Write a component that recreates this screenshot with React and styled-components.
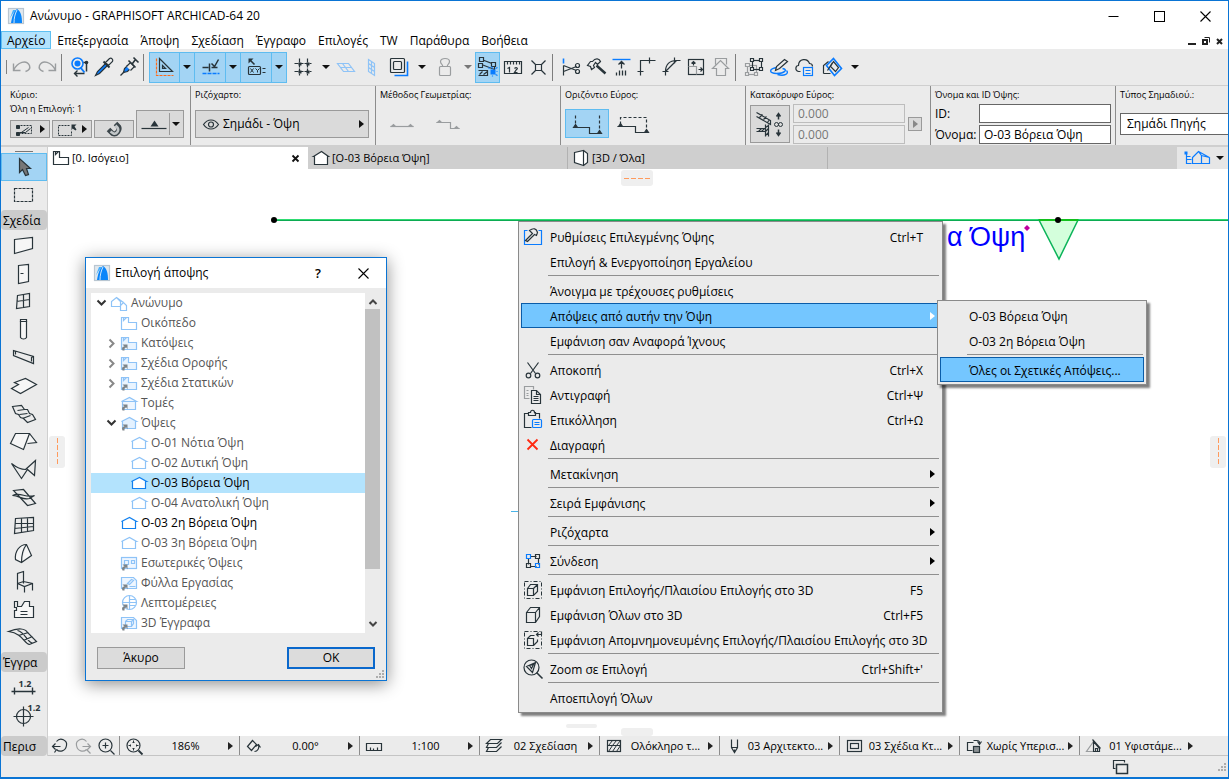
import React from "react";
import styled, { createGlobalStyle, css } from "styled-components";

const ink = "#28343a";
const blue = "#0a7cff";
const pale = "#8ec3f7";
const ghost = "#9a9d9f";
const orange = "#ff6a1a";

const Global = createGlobalStyle`
  * { box-sizing: border-box; }
  html, body { margin: 0; padding: 0; }
  body { font-family: "Open Sans", "Noto Sans", sans-serif; font-size: 12px; line-height: 16px; color: #000; }
  button, input, select { font: inherit; color: inherit; }
  button { padding: 0; border: 0; background: none; }
  svg { display: block; flex: none; overflow: visible; }
`;

/* ---------- drawings ---------- */

/* Strokes run through pixel centres, unless `raw` says that the paths already do. */
const Glyph = ({ w = 20, h = 20, c = ink, sw = 1.2, raw, children }) => (
  <svg
    width={w} height={h} fill="none" stroke={c} strokeWidth={sw} aria-hidden="true"
    viewBox={raw || c === "none" ? `0 0 ${w} ${h}` : `-0.5 -0.5 ${w} ${h}`}
  >
    {children}
  </svg>
);

const Caret = ({ c = "#111" }) => (
  <Glyph w={8} h={4} c="none"><path d="M0 0h8L4 4z" fill={c} /></Glyph>
);
const Arrow = ({ c = "#111" }) => (
  <Glyph w={5} h={8} c="none"><path d="M0 0v8l5-4z" fill={c} /></Glyph>
);

const Logo = () => (
  <Glyph w={16} h={16} c="none">
    <rect x=".5" y=".5" width="15" height="15" fill="#e1e8ee" stroke="#b9c6d1" />
    <path d="M1 13L5 2h3C4 6 2 10 1 13z" fill="#45b0ff" />
    <path d="M3 15C4 8 6 3 9 1c4 2 5 8 5 14z" fill="#0a86fa" />
    <path d="M6 15c0-5 1-9 3-13" stroke="#fff" strokeWidth=".8" />
  </Glyph>
);

const Undo = () => <Glyph c={ghost} sw={1.4}><path d="M1 6v7h7M1 13C5 4 14 2 17 8c1 3-1 5-4 6" /></Glyph>;
const Redo = () => <Glyph c={ghost} sw={1.4}><path d="M18 6v7h-7M18 13C14 4 5 2 2 8c-1 3 1 5 4 6" /></Glyph>;
const FindSelect = () => (
  <Glyph>
    <circle cx="8" cy="6" r="5.5" stroke={blue} strokeWidth="1.6" />
    <circle cx="8" cy="6" r="3" fill={blue} stroke="none" />
    <path d="M11 10l4 5" stroke={blue} strokeWidth="2" />
    <path d="M17 14V5M14 5h3" strokeWidth="1.5" /><circle cx="17" cy="5" r="1.800" fill={ink} stroke="none" />
    <path d="M6 16h9M8 13l-3 3 3 3" strokeWidth="1.4" />
  </Glyph>
);
const Dropper = () => (
  <Glyph>
    <path d="M1 18l2-4 8-8 2 2-8 8z" fill={blue} stroke={ink} />
    <path d="M9 4l6 6" strokeWidth="2" /><path d="M11 5l4-4c2-1 4 1 3 3l-4 4z" fill="#ebebeb" />
  </Glyph>
);
const Syringe = () => (
  <Glyph>
    <path d="M1 18l4-4" /><path d="M4 15l1-4 3-3 3 3-3 3z" fill={blue} /><path d="M7 9l4-4 4 4-4 4" fill="#ebebeb" /><path d="M9 3l7 7M13 6l3-4M14 0l5 5" strokeWidth="1.6" />
  </Glyph>
);
const SetSquare = () => (
  <Glyph>
    <path d="M4 1v13h13zM7 8v3h3z" /><path d="M1 1v17h17" stroke={orange} strokeDasharray="3 1" />
  </Glyph>
);
const SnapGuide = () => (
  <Glyph><path d="M2 10h6M9 6v8M11 10h6M11 6l3 3 4-7" strokeWidth="1.5" /><path d="M2 16h17" stroke={blue} strokeDasharray="4 1" strokeWidth="1.5" /></Glyph>
);
const Tracker = () => (
  <Glyph>
    <path d="M2 1h5L2 6z" fill={ink} stroke="none" /><path d="M4 3l4 4" strokeWidth="1.6" /><rect x="2" y="9" width="12" height="8" rx="1" />
    <path d="M4 11l3 4M7 11l-3 4M9 11l2 2 2-2M11 13v2M16 11h3M16 15h3" strokeWidth="1" />
  </Glyph>
);
const Grid = () => <Glyph><path d="M6 1v17M14 1v17M1 6h17M1 14h17" strokeDasharray="4 1" /><path d="M5 5h3v3H5zM13 5h3v3h-3zM5 13h3v3H5zM13 13h3v3h-3z" fill={ink} stroke="none" /></Glyph>;
const PlaneFlat = () => <Glyph c={pale}><path d="M1 6h11l6 8H7zM4 10h11M6 6l6 8" /></Glyph>;
const PlaneUp = () => <Glyph c={pale}><path d="M7 2l6 4v12l-6-4zM10 4v12M7 6l6 4M7 10l6 4" /></Glyph>;
const Stack = () => <Glyph><path d="M5 18h13V4" stroke={blue} strokeWidth="1.6" /><rect x="1" y="1" width="14" height="14" rx="1" /><rect x="4" y="4" width="8" height="8" rx="1" /></Glyph>;
const Stamp = () => <Glyph c={ghost}><rect x="4" y="9" width="11" height="9" rx="1" /><path d="M7 9c1-2-2-2-2-5 0-4 9-4 9 0 0 3-3 3-2 5" /></Glyph>;
const Suspend = () => (
  <Glyph>
    <path d="M3 2l13 5v5L3 7" /><path d="M1 0h4v4H1zM0 6h4v4H0zM13 5h4v4h-4z" fill="#a3d4f4" /><path d="M0 13h9v5H0M1 17l3-3M5 17l4-3" />
    <path d="M12 12h5v5h-5z" fill={blue} stroke="none" /><path d="M13 9l1 2M19 10l-2 1M19 14h-1M19 18l-2-1M14 18v1M10 10l1 1" stroke={blue} />
  </Glyph>
);
const Measure = () => <Glyph><path d="M1 4h17v12H1zM4 4v3M7 4v3M10 4v3M13 4v3M16 4v3M4 11l2-1v5M11 11c2-2 4 0 2 1l-2 3h3" /></Glyph>;
const Explode = () => <Glyph><path d="M7 7h6v6H7zM7 7L3 3M13 7l4-4M7 13l-4 4M13 13l4 4" /></Glyph>;
const Split = () => <Glyph><path d="M2 1v5" stroke={blue} strokeWidth="1.6" /><path d="M2 8v10M2 14l13-5M2 8l13 5" /><circle cx="16" cy="8" r="2" /><circle cx="16" cy="14" r="2" /></Glyph>;
const Adjust = () => <Glyph><path d="M6 4c3-4 7-3 8 0l-3 3-2-2-2 3 1 2-3 2-1-3-3-1 3-4z" /><path d="M10 8l9 8" strokeWidth="2.400" /></Glyph>;
const Elevate = () => <Glyph><path d="M1 2h18" stroke={blue} strokeWidth="1.4" /><path d="M10 11V4M7 7l3-3 3 3M5 18v-3M8 18v-5M11 18v-5M14 18v-5" strokeWidth="1.3" /></Glyph>;
const Intersect = () => <Glyph><path d="M4 18V3h9M1 14h6M13 0v6M13 3h6" /></Glyph>;
const Fillet = () => <Glyph><path d="M4 18v-4C4 7 8 3 15 3M1 14h6M13 0v6M4 14L15 3M15 3h4" /></Glyph>;
const Resize = () => <Glyph><rect x="2" y="2" width="15" height="15" /><path d="M2 9h8v8" stroke={ghost} /><path d="M7 8V4M5 6l2-2 2 2M12 12h4M14 10l2 2-2 2" /></Glyph>;
const HouseTool = () => <Glyph c={ghost}><path d="M1 11l8-8 8 8H14v7H5v-7zM4 7V1h11v6" /></Glyph>;
const GroupIcon = () => <Glyph><rect x="3" y="8" width="9" height="9" stroke={ghost} /><path d="M1 6h4v3H1zM1 15h3v3H1zM10 15h3v3h-3z" stroke={ghost} fill="#ebebeb" /><rect x="8" y="3" width="9" height="9" /><path d="M6 1h3v3H6zM15 1h3v3h-3zM6 10h3v3H6zM15 10h3v3h-3z" fill="#ebebeb" /></Glyph>;
const Markup = () => <Glyph><path d="M8 10c-9 1-9 6-1 6s12-4 6-5M8 17c7 2 12-1 9-4" stroke={blue} strokeWidth="1.4" /><path d="M6 13l1-4 8-7 3 2-8 7z" fill="#ebebeb" /></Glyph>;
const Cloud = () => <Glyph><path d="M6 14H4c-4-1-3-6 0-6 0-7 9-8 11-2 3 0 3 2 3 3" /><rect x="9" y="10" width="9" height="8" stroke={blue} fill="#ebebeb" /><path d="M11 13h5M11 16h5" stroke={blue} strokeWidth="1" /></Glyph>;
const Marker3 = () => <Glyph><path d="M1 16V8l5-4M1 16h7" /><path d="M11 1l8 10-7 7-8-10z" stroke={blue} strokeWidth="1.6" /><path d="M8 9l3-5 5 6-3 4zM5 13L10 5" /></Glyph>;

/* toolbox drawings, 26 x 24 */
const Tool = ({ children }) => <Glyph w={26} h={24}>{children}</Glyph>;
const tools = {
  arrow: <Tool><path d="M8 3v14l3-3 3 6 3-1-2-6h4z" fill="#777" /></Tool>,
  marquee: <Tool><rect x="3" y="5" width="18" height="13" strokeDasharray="3 1" /></Tool>,
  wall: <Tool><path d="M3 6l18-2v11L3 20z" fill="#f6f6f6" /></Tool>,
  door: <Tool><path d="M7 4l10-1v17L7 22zM9 12h3" fill="#f6f6f6" /></Tool>,
  window: <Tool><path d="M6 6l12-2v13L5 19zM12 5v13M5 12l13-2" /></Tool>,
  column: <Tool><path d="M9 4v16c1 2 5 2 6 0V4z" fill="#f6f6f6" /><path d="M9 2h6v2H9z" /></Tool>,
  beam: <Tool><path d="M2 5l20 6v7L2 10zM2 5l2 1v3M22 11l-2 1v4" /></Tool>,
  slab: <Tool><path d="M0 15l7-4-4-2 11-4 11 6-16 9z" fill="#f6f6f6" /></Tool>,
  stair: <Tool><path d="M1 5l9-1 3 4 3 0 2 4 3 1 3 5-8 3-4-4-3-1-2-3-3-1zM6 9l7-1M8 13l8-1M11 17l8-3" /></Tool>,
  roof: <Tool><path d="M-1 14L4 4h14l-6 16zM18 4l7 9-9 1" fill="#f6f6f6" /></Tool>,
  shell: <Tool><path d="M0 6c5 4 10 6 14 6l10-9-1 15-7-6-6 9zM14 12l10-9" /></Tool>,
  skylight: <Tool><path d="M2 5l10-1 12 14-8 2zM1 10c8-4 13 3 22 0l-5 3c-7 2-10-3-17-3z" /></Tool>,
  curtain: <Tool><path d="M4 5l18-1v13L3 20zM10 5v14M16 5v13M4 10h18M3 15l19-2" /></Tool>,
  morph: <Tool><path d="M4 18C3 10 8 3 15 3l5 11-10 7zM15 3c-4 5-5 11-5 18" fill="#f6f6f6" /></Tool>,
  object: <Tool><path d="M6 14V4l6-2v12M6 14l6-2 9 2v7M6 14v6M6 14l7 3 8-3M13 17v6" /></Tool>,
  zone: <Tool><path d="M3 4h3v5h4l3-5h5v5h4v11H3v-7h2v-3H3zM9 14h7M9 17h7" fill="#f6f6f6" /></Tool>,
  mesh: <Tool><path d="M-3 6c10-4 17-3 19 1l9 9-7 3C12 18 12 8-3 6zM6 5c8 2 8 10 15 13M7 10l10-3M12 15l9-4" /></Tool>,
  dimension: <Tool><path d="M0 16h24M3 12v7M21 12v7" strokeWidth="1.4" /><text x="7" y="11" fontSize="9" fontWeight="bold" fill={ink} stroke="none">1.2</text></Tool>,
  level: <Tool><circle cx="12" cy="13" r="7" /><path d="M2 13h20M12 3v20" /><text x="16" y="7" fontSize="9" fontWeight="bold" fill={ink} stroke="none">1.2</text></Tool>,
};

/* navigator drawings, 18 x 16 */
const Link = () => <path d="M2 15c-1-3 0-4 2-4L2 9h5v5l-1-2c-2 0-2 1-2 3z" fill="#7d8489" stroke="none" />;
const nav = (c, link) => ({
  project: <Glyph w={18} h={16} c={c}><path d="M1 11V6l5-4 4 4v5zM10 11v4h6v-5l-3-3-3 3M6 2l7 5" /></Glyph>,
  plan: <Glyph w={18} h={16} c={c}><path d="M1 2h7v5h8v7H1z" fill={link ? "#e9f4ff" : "#fff"} /><path d="M3 2v3l3-3" />{link && <Link />}</Glyph>,
  section: <Glyph w={18} h={16} c={c}><path d="M1 6l8-4 7 4zM2 6v8h13V6" fill="#eef6ff" />{link && <Link />}</Glyph>,
  elevation: <Glyph w={18} h={16} c={c}><path d="M1 6l8-4 7 4h-1v7H2V6z" fill={link ? "#e3f1ff" : "#fff"} />{link && <Link />}</Glyph>,
  interior: <Glyph w={18} h={16} c={c}><rect x="1" y="2" width="15" height="11" fill="#eef6ff" /><path d="M4 5h4v4H4zM11 5h3v3h-3z" /><Link /></Glyph>,
  worksheet: <Glyph w={18} h={16} c={c}><path d="M1 2h12l3 3v8H1z" fill="#eef6ff" /><path d="M7 8l4-4 2 1-4 4zM9 11h6" /><Link /></Glyph>,
  detail: <Glyph w={18} h={16} c={c}><circle cx="9" cy="7" r="7" /><path d="M2 7h14M9 0v14M9 10h6M9 4h6" /><Link /></Glyph>,
  doc3d: <Glyph w={18} h={16} c={c}><path d="M1 2h12l3 3v8H1z" fill="#eef6ff" /><path d="M5 6l2-2h6v4l-2 3H5zM5 6h6v5M11 6l2-2" /><Link /></Glyph>,
});

const Cube = () => <path d="M3 7l4-5h9v9l-4 6H3zM3 7h9v10M12 7l4-5" />;
const DashFrame = () => <rect x="1" y="1" width="17" height="17" strokeDasharray="4 2 1 2" />;
const menuIcons = {
  settings: <Glyph><path d="M4 3H1v14h17V3h-3" stroke={blue} /><path d="M2 13l7-7-3-3c4-3 7-2 8 2l-1 3-2-1-7 7z" fill="#ebebeb" /></Glyph>,
  cut: <Glyph><path d="M4 2l8 11M15 2L7 13" /><circle cx="5" cy="15" r="2.300" /><circle cx="14" cy="15" r="2.300" /></Glyph>,
  copy: <Glyph><path d="M10 4V1H1v12h5M3 5h2M3 8h2M3 10h2" stroke={ghost} /><path d="M8 5h5l4 4v9H8zM13 5v4h4" fill="#ebebeb" /><path d="M10 11h5M10 13h5M10 15h5" strokeWidth="1" /></Glyph>,
  paste: <Glyph><path d="M8 17H1V3h4M11 3h5v5M5 2h2c0-3 4-3 4 0h1v3H5z" /><rect x="9" y="9" width="9" height="8" rx="1" stroke={blue} /><path d="M11 12h5M11 14h5" stroke={blue} strokeWidth="1" /></Glyph>,
  remove: <Glyph c="#ff2a12" sw={1.800}><path d="M4 4l10 10M14 4L4 14" /></Glyph>,
  connect: <Glyph><path d="M7 5h6M15 7v6M5 7v6M7 15h6" /><path d="M3 3h4v4H3zM12 12h4v4h-4z" stroke={blue} /><path d="M12 3h4v4h-4zM3 12h4v4H3z" /></Glyph>,
  sel3d: <Glyph sw={1}><DashFrame /><path d="M4 8l3-4h7v7l-4 4H4zM4 8h6v7M10 8l4-4" strokeWidth="1.2" /></Glyph>,
  all3d: <Glyph><Cube /></Glyph>,
  mem3d: <Glyph sw={1}><DashFrame /><path d="M4 8l3-3h4M4 8h6v7H4zM10 15l4-4V9M18 1v3h-5M15 2l-2 2 2 2" strokeWidth="1.2" /></Glyph>,
  zoom: <Glyph><circle cx="8" cy="8" r="7.500" /><path d="M13 13l6 6" strokeWidth="1.600" /><path d="M3 7l9-4-3 10zM6 6l4-1-2 4z" /></Glyph>,
};

/* ---------- window frame ---------- */

const Window = styled.div`
  display: flex; flex-direction: column; min-height: 100vh;
  border: 1px solid #0a74d4; border-bottom-width: 2px; background: #ebebeb; overflow: hidden;
`;
const TitleBar = styled.header`
  display: flex; align-items: center; height: 30px; padding-left: 7px; background: #fff;
`;
const Caption = styled.h1`margin: 0 0 0 6px; flex: 1; font-size: 12px; font-weight: 400;`;
const CaptionButton = styled.button`width: 46px; height: 30px; display: grid; place-items: center;`;

const MenuBar = styled.nav`display: flex; height: 18px; background: #fff;`;
const MenuTitle = styled.button`
  padding: 0 6px; line-height: 20px; white-space: nowrap;
  ${(p) => p.$open && css`background: #b3e3fd; box-shadow: inset 0 0 0 1px #5fc0f2;`}
`;
const ChildControls = styled.div`display: flex; align-items: center; gap: 6px; margin-left: auto; padding: 2px 5px 0 0;`;

const Toolbar = styled.div`
  display: flex; align-items: center; height: 37px; padding-left: 5px;
  border-bottom: 1px solid #cfcfcf;
`;
const ToolButton = styled.button`
  display: grid; place-items: center; width: ${(p) => p.$w || 25}px; height: 31px; flex: none;
  ${(p) => p.$on && css`background: #a3d4f4; border: 1px solid #5fbcf0;`}
  ${(p) => p.$join && css`border-left: 0;`}
`;
const Rule = styled.span`width: 1px; height: 27px; background: #7d7d7d; margin: 0 ${(p) => p.$r || 4}px 0 2px; flex: none;`;
const Grip = styled.span`width: 1px; height: 14px; background: #808080; margin-right: 2px; flex: none;`;

const InfoBar = styled.div`display: flex; height: 61px; border-bottom: 2px solid #cfcfcf; padding-left: 5px; overflow: hidden;`;
const Section = styled.section`
  flex: ${(p) => (p.$last ? "1 0 108px" : "none")}; width: 185px; padding: 2px 4px 0 4px;
  ${(p) => !p.$last && css`border-right: 1px solid #8c8c8c;`}
`;
const Small = styled.p`margin: 0; font-size: 9px; line-height: 14px; white-space: nowrap;`;
const SmallLabel = styled(Small)`display: block;`;
const Row = styled.div`display: flex; align-items: ${(p) => p.$align || "center"}; gap: ${(p) => p.$gap ?? 2}px; margin-top: ${(p) => p.$top || 0}px;`;
const Stacked = styled.div`display: flex; flex-direction: column; gap: 2px;`;
const PushButton = styled.button`
  display: flex; align-items: center; justify-content: center; gap: ${(p) => p.$gap ?? 7}px; flex: none;
  width: ${(p) => p.$w}px; height: ${(p) => p.$h || 18}px; background: ${(p) => (p.$flat ? "transparent" : "#dadada")};
  border: ${(p) => (p.$flat ? "0" : "1px solid #9a9a9a")};
  ${(p) => p.$on && css`background: #a3d4f4; border-color: #5fbcf0;`}
`;
const ButtonRule = styled.i`width: 1px; height: 22px; background: #9a9a9a;`;
const WideButton = styled(PushButton)`justify-content: flex-start; gap: 4px; padding: 0 4px 0 7px; span { flex: 1; text-align: left; }`;
const Field = styled.input`
  width: ${(p) => p.$w}px; height: 19px; padding: 0 4px; border: 1px solid #666; background: #fff; border-radius: 0;
  &:disabled { border-color: #bdbdbd; background: #ebebeb; color: #777; }
`;
const FieldLabel = styled.label`display: flex; align-items: center; gap: 2px; span { width: 42px; }`;
const TypeSelect = styled.select`
  appearance: none; width: 200px; height: 22px; margin-top: 11px; padding: 0 6px; border: 1px solid #666; border-radius: 0; background: #fff;
`;

const Body = styled.div`display: flex; flex: 1; min-height: 0;`;
const Toolbox = styled.aside`
  width: 47px; flex: none; display: flex; flex-direction: column; border-right: 1px solid #cfcfcf;
  &::before { content: ""; height: 1px; width: 18px; margin: 4px 14px 1px; background: #777; flex: none; }
`;
const ToolItem = styled.button`
  display: grid; place-items: center; height: 28px; width: 46px; flex: none;
  ${(p) => p.$on && css`background: #a3d4f4; border: 1px solid #5fbcf0;`}
`;
const ToolHeading = styled.h2`
  margin: ${(p) => (p.$bottom ? "auto 0 0" : "1px 0")}; padding-left: 2px; height: 20px; flex: none; font-size: 12px; line-height: 21px; font-weight: 400;
  background: #cbcbcb; border-radius: 4px; white-space: nowrap;
`;

const Work = styled.div`flex: 1; min-width: 0; display: flex; flex-direction: column;`;
const Tabs = styled.div`display: flex; height: 22px; background: #cfcfcf;`;
const Tab = styled.button`
  display: flex; align-items: center; gap: 2px; width: 260px; padding: 0 9px 0 4px; font-size: 11px;
  background: ${(p) => (p.$on ? "#fff" : "transparent")};
  ${(p) => !p.$on && css`border-right: 1px solid #b2b2b2;`}
  span { flex: 1; text-align: left; }
`;
const NavPopup = styled.button`display: flex; align-items: center; justify-content: space-between; width: 51px; padding: 0 4px 0 7px; margin-left: auto; background: #e6e6e6;`;

const Canvas = styled.main`position: relative; flex: 1; min-height: 567px; background: #fff;`;
const Drawing = styled.svg`position: absolute; inset: 0; width: 100%; height: 100%;`;

const StatusBar = styled.div`display: flex; height: 20px; border-bottom: 1px solid #c4c4c4;`;
const ZoomTools = styled.div`display: flex; align-items: center; width: 71px; gap: 5px; padding-left: 3px;`;
const StatusCell = styled.button`
  display: flex; align-items: center; flex: none; width: 120px; padding: 0 6px 0 5px; border-left: 1px solid #8c8c8c; font-size: 11px;
  span { flex: 1; text-align: center; white-space: nowrap; }
`;
const Footer = styled.footer`display: flex; justify-content: flex-end; align-items: center; gap: 90px; height: 21px; padding-right: 2px;`;

/* ---------- menus ---------- */

const Menu = styled.div`
  position: absolute; left: ${(p) => p.$x}px; top: ${(p) => p.$y}px; width: ${(p) => p.$w}px;
  padding: 2px; background: #ebebeb; border: 1px solid #8a8a8a; box-shadow: 3px 3px 2px rgba(0, 0, 0, 0.5);
`;
const MenuItem = styled.button`
  display: flex; align-items: center; width: 100%; height: 25px; border: 1px solid transparent; padding: 0 ${(p) => (p.$sub ? 4 : 16)}px 0 0;
  ${(p) => p.$on && css`background: #74c6ff; border-color: #0a5ca8;`}
  em { font-style: normal; }
  span { flex: 1; text-align: left; padding-top: 2px; white-space: nowrap; }
  em { padding-top: 2px; }
`;
const IconSlot = styled.i`width: 28px; flex: none; padding-left: 1px; height: 20px;`;
const Divider = styled.hr`height: 1px; margin: 1px 1px 2px 27px; border: 0; background: #8f8f8f;`;

const menu = [
  { t: "Ρυθμίσεις Επιλεγμένης Όψης", k: "Ctrl+T", i: "settings" },
  { t: "Επιλογή & Ενεργοποίηση Εργαλείου" }, null,
  { t: "Άνοιγμα με τρέχουσες ρυθμίσεις" },
  { t: "Απόψεις από αυτήν την Όψη", sub: true, on: true },
  { t: "Εμφάνιση σαν Αναφορά Ίχνους" }, null,
  { t: "Αποκοπή", k: "Ctrl+X", i: "cut" },
  { t: "Αντιγραφή", k: "Ctrl+Ψ", i: "copy" },
  { t: "Επικόλληση", k: "Ctrl+Ω", i: "paste" },
  { t: "Διαγραφή", i: "remove" }, null,
  { t: "Μετακίνηση", sub: true }, null,
  { t: "Σειρά Εμφάνισης", sub: true }, null,
  { t: "Ριζόχαρτα", sub: true }, null,
  { t: "Σύνδεση", sub: true, i: "connect" }, null,
  { t: "Εμφάνιση Επιλογής/Πλαισίου Επιλογής στο 3D", k: "F5", i: "sel3d" },
  { t: "Εμφάνιση Όλων στο 3D", k: "Ctrl+F5", i: "all3d" },
  { t: "Εμφάνιση Απομνημονευμένης Επιλογής/Πλαισίου Επιλογής στο 3D", i: "mem3d" }, null,
  { t: "Zoom σε Επιλογή", k: "Ctrl+Shift+'", i: "zoom" }, null,
  { t: "Αποεπιλογή Όλων" },
];
const submenu = [{ t: "Ο-03 Βόρεια Όψη" }, { t: "Ο-03 2η Βόρεια Όψη" }, null, { t: "Όλες οι Σχετικές Απόψεις...", on: true }];

const MenuList = ({ items, ...pos }) => (
  <Menu role="menu" {...pos}>
    {items.map((m, n) => m ? (
      <MenuItem key={n} role="menuitem" $on={m.on} $sub={m.sub}>
        <IconSlot>{m.i && menuIcons[m.i]}</IconSlot>
        <span>{m.t}</span>
        {m.k && <em>{m.k}</em>}
        {m.sub && <Arrow c={m.on ? "#fff" : "#000"} />}
      </MenuItem>
    ) : <Divider key={n} />)}
  </Menu>
);

/* ---------- dialog ---------- */

const Dialog = styled.section`
  position: absolute; left: 37px; top: 88px; width: 302px; height: 424px; display: flex; flex-direction: column;
  border: 1px solid #0a74d4; background: #ebebeb; box-shadow: 0 3px 16px rgba(0, 0, 0, 0.45);
`;
const DialogTitle = styled.header`
  display: flex; align-items: center; height: 30px; padding-left: 8px; background: #fff;
  h2 { margin: 0 0 0 5px; flex: 1; font-size: 12px; font-weight: 400; }
`;
const HelpButton = styled.button`width: 44px; font-size: 13px; font-weight: 600;`;
const TreeBox = styled.div`display: flex; height: 340px; margin: 5px 6px 0 5px; background: #fff;`;
const Tree = styled.div`flex: 1;`;
const TreeRow = styled.button`
  display: flex; align-items: center; gap: 3px; width: 100%; height: 20px; padding-left: ${(p) => 5 + p.$d * 10}px;
  color: ${(p) => (p.$active ? "#000" : "#555")}; background: ${(p) => (p.$on ? "#b3e3fd" : "transparent")};
  white-space: nowrap;
`;
const Twist = styled.i`display: grid; place-items: center; width: 11px; height: 12px;`;
const ScrollBar = styled.div`
  display: flex; flex-direction: column; align-items: center; width: 15px; background: #ebebeb; padding: 6px 0;
  &::after { content: ""; order: 1; width: 15px; height: 260px; margin: 5px 0 auto; background: #c1c1c1; }
  svg:last-child { order: 2; }
`;
const DialogActions = styled.div`display: flex; justify-content: space-between; padding: 14px 11px 0;`;
const DialogButton = styled.button`
  width: 88px; height: 22px; background: #dcdcdc;
  border: ${(p) => (p.$primary ? "2px solid #0a68cc" : "1px solid #9a9a9a")};
`;
const Corner = styled.i`position: absolute; right: 2px; bottom: 2px;`;

const tree = [
  ["Ανώνυμο", 0, "project", "open"],
  ["Οικόπεδο", 1, "plan"],
  ["Κατόψεις", 1, "plan", "shut", true],
  ["Σχέδια Οροφής", 1, "plan", "shut", true],
  ["Σχέδια Στατικών", 1, "plan", "shut", true],
  ["Τομές", 1, "section", "", true],
  ["Όψεις", 1, "elevation", "open", true],
  ["Ο-01 Νότια Όψη", 2, "elevation"],
  ["Ο-02 Δυτική Όψη", 2, "elevation"],
  ["Ο-03 Βόρεια Όψη", 2, "elevation", "", false, true, true],
  ["Ο-04 Ανατολική Όψη", 2, "elevation"],
  ["Ο-03 2η Βόρεια Όψη", 1, "elevation", "", false, true],
  ["Ο-03 3η Βόρεια Όψη", 1, "elevation"],
  ["Εσωτερικές Όψεις", 1, "interior", "", true],
  ["Φύλλα Εργασίας", 1, "worksheet", "", true],
  ["Λεπτομέρειες", 1, "detail", "", true],
  ["3D Έγγραφα", 1, "doc3d", "", true],
];

const Dots = () => (
  <Glyph w={8} h={8} c="none"><path d="M6 0h2v2H6zM3 3h2v2H3zM6 3h2v2H6zM0 6h2v2H0zM3 6h2v2H3zM6 6h2v2H6z" fill="#adadad" /></Glyph>
);
const Cross = () => <Glyph w={11} h={11} c="#000" sw={1.1}><path d="M0 0l10 10M10 0L0 10" /></Glyph>;

const ViewDialog = () => (
  <Dialog role="dialog" aria-labelledby="dlg">
    <DialogTitle>
      <Logo /><h2 id="dlg">Επιλογή άποψης</h2>
      <HelpButton>?</HelpButton>
      <CaptionButton aria-label="Close"><Cross /></CaptionButton>
    </DialogTitle>
    <TreeBox>
      <Tree role="tree">
        {tree.map(([t, d, icon, fold, link, active, on]) => (
          <TreeRow key={t} role="treeitem" $d={d} $active={active} $on={on}>
            <Twist>
              {fold === "open" && <Glyph w={9} h={6} c="#333" sw={2} raw><path d="M.5 .5l4 4 4-4" /></Glyph>}
              {fold === "shut" && <Glyph w={6} h={9} c="#888" sw={2} raw><path d="M.5 .5l4 4-4 4" /></Glyph>}
            </Twist>
            {nav(active ? "#1180ef" : pale, link)[icon]}
            {t}
          </TreeRow>
        ))}
      </Tree>
      <ScrollBar>
        <Glyph w={8} h={5} c="#444" sw={2} raw><path d="M.5 5L4 1.500 7.500 5" /></Glyph>
        <Glyph w={8} h={5} c="#444" sw={2} raw><path d="M.5 0L4 3.500 7.500 0" /></Glyph>
      </ScrollBar>
    </TreeBox>
    <DialogActions>
      <DialogButton>Άκυρο</DialogButton>
      <DialogButton $primary>OK</DialogButton>
    </DialogActions>
    <Corner><Dots /></Corner>
  </Dialog>
);

/* ---------- canvas drawing ---------- */

const handleSpot = {
  top: css`width: 32px; height: 16px; top: 1px; left: calc(50% - 17px);`,
  left: css`width: 16px; height: 32px; left: 1px; top: calc(50% - 17px);`,
  right: css`width: 16px; height: 32px; right: 2px; top: calc(50% - 17px);`,
  bottom: css`width: 32px; height: 8px; bottom: 0; left: calc(50% - 17px);`,
  lower: css`width: 31px; height: 4px; bottom: 8px; left: calc(50% - 72px);`,
};
const Handle = styled.i`
  position: absolute; background: #efefef; border-radius: 3px; display: grid; place-items: center;
  ${(p) => handleSpot[p.$at]}
`;
const Dashes = ({ v, c = "#ff9a5c" }) => v
  ? <Glyph w={1} h={27} c={c} sw={1}><path d="M0 -.5v28" strokeDasharray="5 2" /></Glyph>
  : <Glyph w={27} h={1} c={c} sw={1}><path d="M-.5 0h27" strokeDasharray="5 2" /></Glyph>;

const Elevation = () => (
  <Drawing>
    <line x1="226" x2="100%" y1="50.5" y2="50.5" stroke="#2fdc72" strokeWidth="1" />
    <line x1="226" x2="100%" y1="51.5" y2="51.5" stroke="#0cab52" strokeWidth="1" />
    <path d="M991 51h39l-19 39z" fill="#d4ffdc" stroke="#0cb45a" strokeWidth="1.5" />
    <path d="M991 51h39" stroke="#12c01c" strokeWidth="2" />
    <circle cx="226" cy="51" r="3" /><circle cx="1010" cy="51" r="3" />
    <text x="899" y="77" fontFamily="Liberation Sans, sans-serif" fontSize="27" fill="#00f">α Όψη</text>
    <path d="M979 56l3 3-3 3-3-3z" fill="#c1009f" />
    <path d="M463 342.500h8" stroke="#4ab4e8" />
  </Drawing>
);

const status = [
  ["186%", <Glyph w={18} h={18}><circle cx="8" cy="8" r="6.500" /><path d="M13 13l4 4" strokeWidth="1.800" /><path d="M8 3v2M8 11v2M3 8h2M11 8h2M7 5h2M7 11h2M5 7v2M11 7v2" strokeWidth="1" /></Glyph>],
  ["0.00°", <Glyph w={18} h={16}><path d="M2 8l5-6 4 4-5 6zM9 13c3 0 5-3 4-7M10 8l3-2 2 3" /></Glyph>],
  ["1:100", <Glyph w={18} h={16}><path d="M1 5h15v7H1zM5 12V9M8 12v-2M12 12V9" /></Glyph>],
  ["02 Σχεδίαση", <Glyph w={18} h={16}><path d="M5 1h11l-4 4H1zM3 5l-2 4h10l5-5M3 9l-2 4h10l5-5" /></Glyph>],
  ["Ολόκληρο τ...", <Glyph w={18} h={16}><rect x="2" y="2" width="13" height="11" /><path d="M2 7h13M3 7l4-5M7 7l4-5M11 7l4-5M3 13l4-6M7 13l4-6M11 13l4-6" strokeWidth="1" /></Glyph>],
  ["03 Αρχιτεκτο...", <Glyph w={18} h={16}><path d="M6 1v8l3 5 3-5V1M6 9h6M9 11v3" /></Glyph>],
  ["03 Σχέδια Κτ...", <Glyph w={18} h={16}><rect x="2" y="2" width="14" height="11" /><rect x="5" y="5" width="8" height="5" /></Glyph>],
  ["Χωρίς Υπερισ...", <Glyph w={18} h={16}><path d="M7 12H2V4h6M8 2h3c3 0 3 1 3 3M12 3l2 3 2-3" /><rect x="8" y="8" width="6" height="6" fill="#8b9194" /></Glyph>],
  ["01 Υφιστάμε...", <Glyph w={18} h={16}><path d="M8 3L1 13h7" stroke={ghost} /><path d="M8 13V3l6 7v3zM10 13v-3h2v3M7 1l8 9" /></Glyph>],
];

const Mag = ({ c = ink, children }) => <Glyph w={18} h={18} c={c}>{children}</Glyph>;

export default function App() {
  return (
    <Window>
      <Global />
      <TitleBar>
        <Logo />
        <Caption>Ανώνυμο - GRAPHISOFT ARCHICAD-64 20</Caption>
        <CaptionButton aria-label="Minimize"><Glyph w={11} h={11} c="#000" sw={1}><path d="M0 5h10" /></Glyph></CaptionButton>
        <CaptionButton aria-label="Maximize"><Glyph w={11} h={11} c="#000" sw={1}><rect x="0" y="0" width="10" height="10" /></Glyph></CaptionButton>
        <CaptionButton aria-label="Close"><Cross /></CaptionButton>
      </TitleBar>
      <MenuBar>
        {["Αρχείο", "Επεξεργασία", "Άποψη", "Σχεδίαση", "Έγγραφο", "Επιλογές", "TW", "Παράθυρα", "Βοήθεια"].map((t, n) => (
          <MenuTitle key={t} $open={n === 0}>{t}</MenuTitle>
        ))}
        <ChildControls>
          <button aria-label="Minimize document"><Glyph w={8} h={8} c="#222" sw={2} raw><path d="M0 7h8" /></Glyph></button>
          <button aria-label="Restore document"><Glyph w={8} h={8} c="#222" sw={1} raw><path d="M2.500 .5h5v5" /><rect x="1" y="3" width="4" height="4" strokeWidth="2" /></Glyph></button>
          <button aria-label="Close document"><Glyph w={7} h={7} c="#222" sw={2} raw><path d="M1 1l5 5M6 1L1 6" /></Glyph></button>
        </ChildControls>
      </MenuBar>

      <Toolbar>
        <Grip />
        <ToolButton aria-label="Undo"><Undo /></ToolButton>
        <ToolButton aria-label="Redo"><Redo /></ToolButton>
        <Rule />
        <ToolButton aria-label="Find and select"><FindSelect /></ToolButton>
        <ToolButton aria-label="Pick up"><Dropper /></ToolButton>
        <ToolButton aria-label="Inject"><Syringe /></ToolButton>
        <Rule $r={5} />
        <ToolButton aria-label="Guide lines" $w={31} $on><SetSquare /></ToolButton>
        <ToolButton aria-label="Guide options" $w={15} $on $join><Caret /></ToolButton>
        <ToolButton aria-label="Snap guides" $w={31} $on $join><SnapGuide /></ToolButton>
        <ToolButton aria-label="Snap options" $w={15} $on $join><Caret /></ToolButton>
        <ToolButton aria-label="Tracker" $w={31} $on $join><Tracker /></ToolButton>
        <ToolButton aria-label="Tracker options" $w={15} $on $join><Caret /></ToolButton>
        <ToolButton aria-label="Grid" $w={31}><Grid /></ToolButton>
        <ToolButton aria-label="Grid options" $w={15}><Caret /></ToolButton>
        <ToolButton aria-label="Editing plane"><PlaneFlat /></ToolButton>
        <ToolButton aria-label="Vertical plane"><PlaneUp /></ToolButton>
        <ToolButton aria-label="Trace" $w={31}><Stack /></ToolButton>
        <ToolButton aria-label="Trace options" $w={15}><Caret /></ToolButton>
        <ToolButton aria-label="Gravity" $w={31}><Stamp /></ToolButton>
        <ToolButton aria-label="Gravity options" $w={15}><Caret c="#777" /></ToolButton>
        <ToolButton aria-label="Suspend groups" $on><Suspend /></ToolButton>
        <ToolButton aria-label="Measure"><Measure /></ToolButton>
        <ToolButton aria-label="Explode"><Explode /></ToolButton>
        <Rule $r={5} />
        <ToolButton aria-label="Split"><Split /></ToolButton>
        <ToolButton aria-label="Adjust"><Adjust /></ToolButton>
        <ToolButton aria-label="Elevate"><Elevate /></ToolButton>
        <ToolButton aria-label="Intersect"><Intersect /></ToolButton>
        <ToolButton aria-label="Fillet"><Fillet /></ToolButton>
        <ToolButton aria-label="Resize"><Resize /></ToolButton>
        <ToolButton aria-label="Trim"><HouseTool /></ToolButton>
        <Rule $r={5} />
        <ToolButton aria-label="Group"><GroupIcon /></ToolButton>
        <ToolButton aria-label="Markup"><Markup /></ToolButton>
        <ToolButton aria-label="BIM cloud"><Cloud /></ToolButton>
        <ToolButton aria-label="3D marker" $w={31}><Marker3 /></ToolButton>
        <ToolButton aria-label="Marker options" $w={15}><Caret /></ToolButton>
      </Toolbar>

      <InfoBar>
        <Section>
          <Small>Κύριο:</Small>
          <Row $align="flex-end">
            <div>
              <Small>Όλη η Επιλογή: 1</Small>
              <Row $top={4}>
                <PushButton $w={40} aria-label="Favorites"><Glyph w={18} h={13} sw={1}><path d="M3 11L13 4M4 9h6l5-4" /><path d="M5 2h11v8H6" strokeDasharray="2 1" /><path d="M1 9h3v3H1zM1 2h3v3H1z" fill={ink} /></Glyph><Arrow /></PushButton>
                <PushButton $w={40} $gap={5} aria-label="Selection"><Glyph w={20} h={13} sw={1}><path d="M12 2H1v10h13V8" strokeDasharray="2 1" /><path d="M14 1h5l-2 2 2 3-1 1-3-2-1 2z" fill={ink} stroke="none" /></Glyph><Arrow /></PushButton>
                <PushButton $w={40} aria-label="Magnet"><Glyph w={18} h={16}><path d="M3 8l4 4c4 2 8-4 6-7l-3-3" stroke="#3c464b" strokeWidth="5" /><path d="M5 10l3 2c3 1 6-3 4-6l-2-2" stroke="#c3c7c9" strokeWidth="2.500" /></Glyph></PushButton>
              </Row>
            </div>
            <PushButton $w={48} $h={28} $gap={2} aria-label="Marker"><Glyph w={26} h={16}><path d="M0 12h25" /><path d="M9 10l4-6 4 6z" fill={ink} stroke="none" /></Glyph><ButtonRule /><Caret /></PushButton>
          </Row>
        </Section>
        <Section>
          <Small>Ριζόχαρτο:</Small>
          <Row $top={8}>
            <WideButton $w={174} $h={28}>
              <Glyph w={16} h={12}><path d="M0 6c4-6 11-6 15 0-4 6-11 6-15 0z" /><circle cx="7.500" cy="6" r="2.500" /></Glyph>
              <span>Σημάδι - Όψη</span><Arrow />
            </WideButton>
          </Row>
        </Section>
        <Section>
          <Small>Μέθοδος Γεωμετρίας:</Small>
          <Row $top={8}>
            <PushButton $flat $w={44} $h={30} aria-label="Straight"><Glyph w={24} h={10} c={ghost}><path d="M0 6h23" /><path d="M1 6l2-2 2 2zM18 6l2-2 2 2z" fill={ghost} /></Glyph></PushButton>
            <PushButton $flat $w={44} $h={30} aria-label="Staggered"><Glyph w={24} h={14} c={ghost}><path d="M0 4h14v6h9" /><path d="M1 4l2-2 2 2zM18 10l2-2 2 2z" fill={ghost} /></Glyph></PushButton>
          </Row>
        </Section>
        <Section>
          <Small>Οριζόντιο Εύρος:</Small>
          <Row $top={7}>
            <PushButton $on $w={44} $h={29} aria-label="Infinite"><Glyph w={30} h={22}><path d="M1 14h16v6h12" /><path d="M3 2v10M27 2v16" strokeDasharray="3 2" /><path d="M1 14l2-3 2 3zM25 20l2-3 2 3z" fill={ink} /></Glyph></PushButton>
            <PushButton $flat $w={44} $h={29} aria-label="Limited"><Glyph w={32} h={18}><path d="M3 9V2h26v13" strokeDasharray="3 2" /><path d="M0 11h18v6h13" /><path d="M1 11l2-3 2 3zM27 17l2-3 2 3z" fill={ink} /></Glyph></PushButton>
          </Row>
        </Section>
        <Section>
          <Small>Κατακόρυφο Εύρος:</Small>
          <Row $top={2} $gap={3}>
            <PushButton $w={40} $h={38} aria-label="Vertical range">
              <Glyph w={28} h={26} sw={1}>
                <path d="M0 1l14 8v4L0 5M3 6l3-3M7 8l3-3M11 11l2-3M9 13v12M12 13v12M0 17h9M0 20h9M9 16l3-2M9 20l3-3M9 24l3-3M2 20l3-3M5 20l3-3" strokeWidth="1.200" />
                <path d="M22 8V2M20 5l2-3 2 3M22 18v6M20 21l2 3 2-3" strokeWidth="1.500" /><circle cx="20" cy="13" r="2" /><circle cx="24" cy="13" r="2" />
              </Glyph>
            </PushButton>
            <Stacked>
              <Field $w={112} disabled defaultValue="0.000" aria-label="Top" />
              <Field $w={112} disabled defaultValue="0.000" aria-label="Bottom" />
            </Stacked>
            <PushButton $w={14} $h={14} disabled aria-label="More"><Arrow c="#888" /></PushButton>
          </Row>
        </Section>
        <Section>
          <Small>Όνομα και ID Όψης:</Small>
          <Row $top={2}>
            <Stacked>
              <FieldLabel><span>ID:</span><Field $w={132} defaultValue="" /></FieldLabel>
              <FieldLabel><span>Όνομα:</span><Field $w={132} defaultValue="Ο-03 Βόρεια Όψη" /></FieldLabel>
            </Stacked>
          </Row>
        </Section>
        <Section $last>
          <SmallLabel as="label" htmlFor="marker">Τύπος Σημαδιού.:</SmallLabel>
          <TypeSelect id="marker"><option>Σημάδι Πηγής</option></TypeSelect>
        </Section>
      </InfoBar>

      <Body>
        <Toolbox>
          {["arrow", "marquee"].map((k) => <ToolItem key={k} $on={k === "arrow"} aria-label={k}>{tools[k]}</ToolItem>)}
          <ToolHeading>Σχεδία</ToolHeading>
          {["wall", "door", "window", "column", "beam", "slab", "stair", "roof", "shell", "skylight", "curtain", "morph", "object", "zone", "mesh"].map((k) => (
            <ToolItem key={k} aria-label={k}>{tools[k]}</ToolItem>
          ))}
          <ToolHeading>Έγγρα</ToolHeading>
          {["dimension", "level"].map((k) => <ToolItem key={k} aria-label={k}>{tools[k]}</ToolItem>)}
          <ToolHeading $bottom>Περισ</ToolHeading>
        </Toolbox>

        <Work>
          <Tabs>
            <Tab $on>
              <Glyph w={18} h={16}><path d="M1 1h6v6h9v7H1z" /><path d="M3 1v3l3-3" /></Glyph><span>[0. Ισόγειο]</span>
              <Glyph w={7} h={7} c="#111" sw={1.800} raw><path d="M.5 .5l6 6M6.500 .5l-6 6" /></Glyph>
            </Tab>
            <Tab><Glyph w={18} h={16}><path d="M1 6l8-5 7 5h-1v8H2V6z" fill="#fff" /></Glyph><span>[Ο-03 Βόρεια Όψη]</span></Tab>
            <Tab><Glyph w={18} h={16}><path d="M2 2l9-2v15l-9-3zM11 0l4 3v9l-4 3" fill="#fff" /></Glyph><span>[3D / Όλα]</span></Tab>
            <NavPopup aria-label="Navigator">
              <Glyph w={26} h={16} c={blue}><path d="M2 3v10h5M2 6h4M2 9h5M8 13V7l6-6 11 6v6zM17 13V5M14 1l3 4 8 2" /><path d="M0 1h3v3H0z" fill={blue} stroke="none" /></Glyph><Caret />
            </NavPopup>
          </Tabs>

          <Canvas>
            <Elevation />
            <Handle $at="top"><Dashes /></Handle>
            <Handle $at="left"><Dashes v /></Handle>
            <Handle $at="right"><Dashes v /></Handle>
            <Handle $at="bottom" />
            <Handle $at="lower" />
            <ViewDialog />
            <MenuList items={menu} $x={470} $y={52} $w={425} />
            <MenuList items={submenu} $x={889} $y={131} $w={210} />
          </Canvas>

          <StatusBar>
            <ZoomTools>
              <button aria-label="Previous zoom"><Mag><path d="M5 4c4-5 11-1 10 4-1 6-7 7-10 4M1 9h8M4 6L1 9l3 3M5 12l-2 3" /></Mag></button>
              <button aria-label="Next zoom"><Mag c={ghost}><path d="M12 4C8-1 1 3 2 8c1 6 7 7 10 4M8 9h8M13 6l3 3-3 3M12 12l4 4" /></Mag></button>
              <button aria-label="Zoom in"><Mag><circle cx="8" cy="8" r="6.500" /><path d="M5 8h6M8 5v6M13 13l4 4" /></Mag></button>
            </ZoomTools>
            {status.map(([t, icon]) => (
              <StatusCell key={t}>{icon}<span>{t}</span><Arrow c="#222" /></StatusCell>
            ))}
          </StatusBar>
        </Work>
      </Body>
      <Footer>
        <Glyph w={16} h={16}><path d="M3 9H1V1h11v2" /><rect x="4" y="5" width="11" height="9" strokeWidth="1.500" /></Glyph>
        <Dots />
      </Footer>
    </Window>
  );
}
